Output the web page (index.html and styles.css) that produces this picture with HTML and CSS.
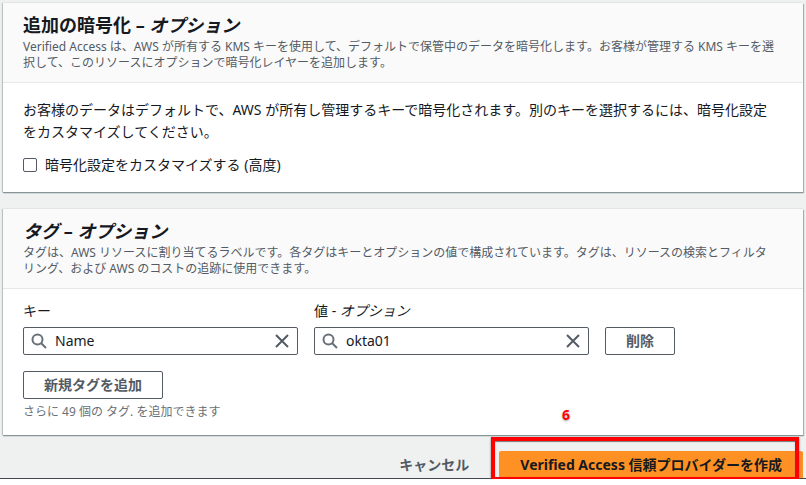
FILE: index.html
```html
<!DOCTYPE html>
<html lang="ja">
<head>
<meta charset="utf-8">
<meta name="viewport" content="width=device-width, initial-scale=1">
<title>Verified Access 信頼プロバイダーを作成</title>
<link rel="stylesheet" href="styles.css">
</head>
<body>
<form class="page">
  <section class="card">
    <header class="card-header">
      <h2 class="title">追加の暗号化 – <i>オプション</i></h2>
      <p class="description">Verified Access は、AWS が所有する KMS キーを使用して、デフォルトで保管中のデータを暗号化します。お客様が管理する KMS キーを選択して、このリソースにオプションで暗号化レイヤーを追加します。</p>
    </header>
    <div class="card-body encryption">
      <p class="text">お客様のデータはデフォルトで、AWS が所有し管理するキーで暗号化されます。別のキーを選択するには、暗号化設定をカスタマイズしてください。</p>
      <label class="check"><input class="check-box" type="checkbox">暗号化設定をカスタマイズする (高度)</label>
    </div>
  </section>

  <section class="card">
    <header class="card-header">
      <h2 class="title"><i>タグ</i> – <i>オプション</i></h2>
      <p class="description">タグは、AWS リソースに割り当てるラベルです。各タグはキーとオプションの値で構成されています。タグは、リソースの検索とフィルタリング、および AWS のコストの追跡に使用できます。</p>
    </header>
    <div class="card-body tags">
      <div class="tag-row">
        <div class="field">
          <label class="label" for="tag-key">キー</label>
          <div class="search">
            <svg class="icon icon-search" viewBox="0 0 16 16" aria-hidden="true"><circle cx="6.5" cy="6.5" r="5"/><path d="M10.2 10.2 15 15"/></svg>
            <input class="search-input" id="tag-key" type="text" value="Name">
            <button class="clear" type="button" aria-label="キーをクリア"><svg class="icon" viewBox="0 0 16 16" aria-hidden="true"><path d="M2 2l12 12M14 2 2 14"/></svg></button>
          </div>
        </div>
        <div class="field">
          <label class="label" for="tag-value">値 - <i>オプション</i></label>
          <div class="search">
            <svg class="icon icon-search" viewBox="0 0 16 16" aria-hidden="true"><circle cx="6.5" cy="6.5" r="5"/><path d="M10.2 10.2 15 15"/></svg>
            <input class="search-input" id="tag-value" type="text" value="okta01">
            <button class="clear" type="button" aria-label="値をクリア"><svg class="icon" viewBox="0 0 16 16" aria-hidden="true"><path d="M2 2l12 12M14 2 2 14"/></svg></button>
          </div>
        </div>
        <div class="remove"><button class="button" type="button">削除</button></div>
      </div>
      <button class="button" type="button">新規タグを追加</button>
      <p class="hint">さらに 49 個の タグ. を追加できます</p>
      <span class="step">6</span>
    </div>
  </section>

  <footer class="actions">
    <button class="cancel" type="button">キャンセル</button>
    <div class="submit">
      <button class="primary" type="submit">Verified Access 信頼プロバイダーを作成</button>
      <span class="highlight"></span>
    </div>
  </footer>
</form>
</body>
</html>
```

FILE: styles.css
```css
* {
  box-sizing: border-box;
}

body {
  margin: 0;
  background: #fff;
  color: #16191f;
  font: 14px/22px "Noto Sans", "Noto Sans CJK JP", sans-serif;
}

h2,
p {
  margin: 0;
}

button,
input {
  font: inherit;
}

.page {
  padding: 3px 3px 0;
  background: #eff0f0;
  border-bottom: 1px solid #414750;
}

.card {
  background: #fff;
  box-shadow: 0 1px 1px #879596, 1px 1px 1px #aab7b8, -1px 0 1px #c4cccd, 0 -1px 0 #e6e9e9;
}

.card + .card {
  margin-top: 17px;
}

.card-header {
  padding: 11px 20px;
  background: #fafafa;
  border-bottom: 1px solid #e6e8e8;
}

.title {
  margin-bottom: 3px;
  font-size: 18px;
  font-weight: 700;
  line-height: 22px;
}

.description,
.hint {
  color: #545b64;
  font-size: 12px;
  line-height: 16px;
}

.description,
.text {
  padding-right: 6px;
}

.card-body {
  padding: 16px 20px;
}

.encryption {
  display: flex;
  flex-direction: column;
  gap: 11px;
}

.check {
  display: flex;
  align-items: center;
  gap: 8px;
}

.check-box {
  appearance: none;
  width: 14px;
  height: 14px;
  margin: 0;
  border: 1px solid #545b64;
  border-radius: 2px;
  background: #fff;
}

.tags {
  position: relative;
  padding-top: 11px;
  padding-bottom: 15px;
}

.tag-row {
  display: grid;
  grid-template-columns: 275fr 275fr 178fr;
  gap: 16px;
  margin-bottom: 16px;
}

.remove {
  align-self: end;
  display: flex;
}

.label {
  display: block;
  margin-bottom: 5px;
}

.search {
  display: flex;
  align-items: center;
  gap: 8px;
  height: 28px;
  padding: 0 7px;
  border: 1px solid #545b64;
  border-radius: 2px;
}

.search-input {
  flex: 1;
  min-width: 0;
  padding: 0;
  border: 0;
  outline: 0;
  background: none;
  color: inherit;
}

.clear {
  display: flex;
  padding: 0;
  border: 0;
  background: none;
}

.icon {
  flex: none;
  width: 16px;
  height: 16px;
  fill: none;
  stroke: #545b64;
  stroke-width: 2;
}

.icon-search {
  stroke: #687078;
}

.button {
  display: block;
  height: 28px;
  padding: 0 20px;
  border: 1px solid #545b64;
  border-radius: 2px;
  background: #fff;
  color: #545b64;
  font-weight: 700;
  line-height: 22px;
}

.hint {
  margin-top: 5px;
  color: #687078;
}

.step {
  position: absolute;
  right: 233px;
  bottom: 9px;
  color: #f00;
  font-size: 14px;
  font-weight: 700;
  text-shadow: 0 0 1px #fff, 0 1px 2px #999;
}

.actions {
  display: flex;
  justify-content: flex-end;
  gap: 30px;
  margin-top: 16px;
}

.cancel,
.primary {
  display: block;
  height: 27px;
  padding: 0;
  border: 0;
  background: none;
  color: #545b64;
  font-weight: 700;
  line-height: 22px;
}

.submit {
  position: relative;
}

.primary {
  padding: 0 21px;
  border-radius: 2px 2px 0 0;
  background: #ff9124;
  color: #16191f;
}

.highlight {
  position: absolute;
  inset: -14px 4px -3px -8px;
  border: 4px solid #f00;
  box-shadow: 0 1px 2px #777, inset 0 1px 1px #777;
  pointer-events: none;
}
```
